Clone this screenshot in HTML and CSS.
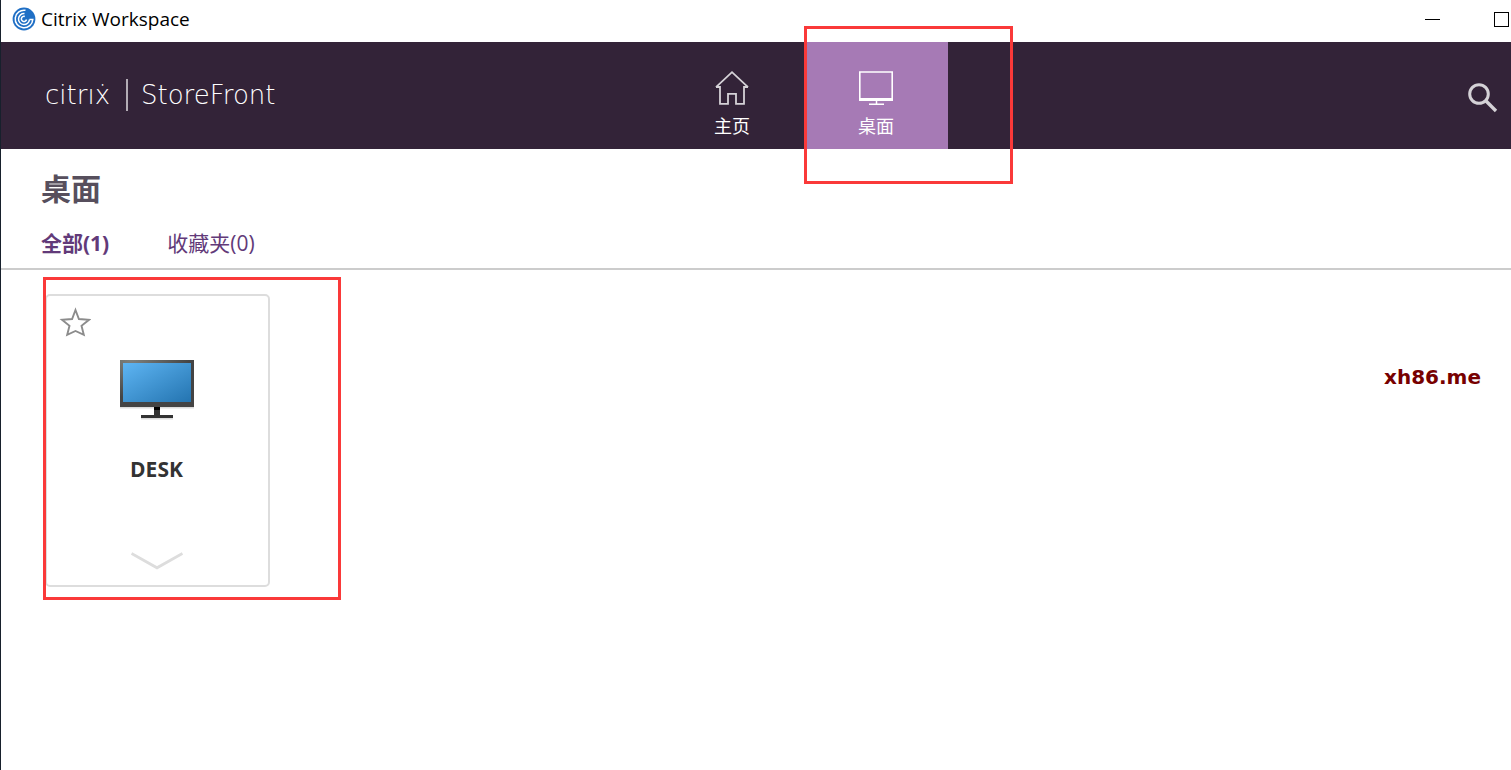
FILE: index.html
```html
<!DOCTYPE html>
<html lang="zh-CN">
<head>
    <meta charset="UTF-8">
    <meta name="viewport" content="width=device-width, initial-scale=1.0">
    <title>Citrix Workspace</title>
    <link rel="stylesheet" href="styles.css">
</head>
<body>
    <!-- Window title bar -->
    <div class="titlebar">
        <svg class="app-icon" viewBox="0 0 24 24" aria-hidden="true">
            <circle cx="12" cy="12" r="11.400" fill="#1f6fc5"/>
            <g fill="none" stroke="#fff" stroke-width="1.500">
                <path d="M13.500 3.300A8.800 8.800 0 1 0 20.800 12.500H17.500"/>
                <path d="M12.500 6.600A5.500 5.500 0 1 0 17.500 12.500"/>
                <path d="M12.800 9.500A2.600 2.600 0 1 0 14.500 12.500"/>
            </g>
        </svg>
        <span class="app-title">Citrix Workspace</span>
        <div class="window-buttons">
            <button class="window-button" aria-label="Minimize">
                <svg width="15" height="15" viewBox="0 0 15 15"><path d="M0 7.500H15" stroke="#000"/></svg>
            </button>
            <button class="window-button" aria-label="Maximize">
                <svg width="15" height="15" viewBox="0 0 15 15"><rect x=".5" y=".5" width="14" height="14" fill="none" stroke="#000"/></svg>
            </button>
        </div>
    </div>

    <header class="header">
        <div class="brand">
            <span class="brand-name">citrıẋ</span>
            <span class="brand-product">StoreFront</span>
        </div>
        <nav class="nav">
            <a class="nav-item" href="#home">
                <svg class="nav-icon" viewBox="0 0 36 36" fill="none" stroke="#d5d2d7" stroke-width="1.800">
                    <path d="M2 17.200L18 2.200L34 17.200M2 17H6V33.800H14V23.800H22V33.800H30V17H34"/>
                </svg>
                <span>主页</span>
            </a>
            <a class="nav-item active" href="#desktops">
                <svg class="nav-icon" viewBox="0 0 36 36" fill="none" stroke="#fff">
                    <path d="M1.800 29V2H34.200V29" stroke-width="1.600"/>
                    <path d="M1 29.500H35" stroke-width="3"/>
                    <path d="M18.500 31V34M11 34.200H26" stroke-width="1.500"/>
                </svg>
                <span>桌面</span>
            </a>
            <div class="highlight highlight-nav"></div>
        </nav>
        <button class="search" aria-label="搜索">
            <svg width="30" height="30" viewBox="0 0 30 30" fill="none" stroke="#d5d2d7">
                <circle cx="11" cy="11" r="9.300" stroke-width="3"/>
                <path d="M17.800 17.800L28 28" stroke-width="3.400"/>
            </svg>
        </button>
    </header>

    <main>
        <h1 class="page-title">桌面</h1>
        <div class="tabs">
            <a class="tab selected" href="#all">全部(1)</a>
            <a class="tab" href="#favorites">收藏夹(0)</a>
        </div>
        <div class="content">
            <div class="card">
                <button class="favorite" aria-label="收藏">
                    <svg width="32" height="30" viewBox="0 0 32 30" fill="none" stroke="#8c8c8c" stroke-width="1.900">
                        <path d="M16.500 3L19.900 12L30 12.800L22.500 18.800L24.800 27.800L16.500 24L8.200 27.800L10.500 18.800L3 12.800L13.100 12Z"/>
                    </svg>
                </button>
                <svg class="desktop-icon" viewBox="0 0 76 62" aria-hidden="true">
                    <defs>
                        <linearGradient id="screen" x1="0" y1="0" x2="1" y2="1">
                            <stop offset="0" stop-color="#5eb5f3"/>
                            <stop offset="1" stop-color="#2474b0"/>
                        </linearGradient>
                        <radialGradient id="frame" cx=".15" cy="0" r=".8">
                            <stop offset="0" stop-color="#7d807d"/>
                            <stop offset="1" stop-color="#444"/>
                        </radialGradient>
                    </defs>
                    <path d="M1 48.500H75M22 59.500H54" stroke="#ddd" stroke-width="2"/>
                    <rect x="1" y="1" width="74" height="47" fill="url(#frame)"/>
                    <rect x="4" y="4" width="68" height="39" fill="url(#screen)"/>
                    <rect x="35" y="48" width="6" height="9" fill="#333"/>
                    <rect x="35" y="48" width="6" height="3" fill="#000"/>
                    <rect x="22" y="56" width="32" height="3" fill="#333"/>
                </svg>
                <span class="card-name">DESK</span>
                <button class="details" aria-label="详细信息">
                    <svg width="52" height="18" viewBox="0 0 52 18"><path d="M.5 1.500L26 15.800L51.500 1.500" fill="none" stroke="#ddd" stroke-width="2.800"/></svg>
                </button>
                <div class="highlight highlight-card"></div>
            </div>
            <span class="site-mark">xh86.me</span>
        </div>
    </main>
</body>
</html>
```
FILE: styles.css
```css
* {
    box-sizing: border-box;
}
body {
    margin: 0;
    min-height: 100vh;
    border-left: 1px solid #17202c;
    background: #fff;
    font-family: "Open Sans", "Noto Sans CJK SC", sans-serif;
}
button {
    padding: 0;
    border: 0;
    background: none;
}
button svg {
    display: block;
}
a {
    color: inherit;
    text-decoration: none;
}

.titlebar {
    display: flex;
    align-items: center;
    height: 42px;
    padding: 0 2px 4px 11px;
}
.app-icon {
    width: 24px;
    height: 24px;
}
.app-title {
    margin-left: 5px;
    font-size: 19px;
    line-height: 24px;
    color: #000;
}
.window-buttons {
    display: flex;
    gap: 54px;
    margin-left: auto;
}

.header {
    display: flex;
    align-items: center;
    height: 107px;
    background: #332338;
    color: #fff;
}
.brand {
    display: flex;
    align-items: center;
    width: 659px;
    padding: 0 0 2px 44px;
    font-family: "DejaVu Sans", sans-serif;
    font-size: 26px;
    font-weight: 200;
    line-height: 32px;
    color: #fff;
}
.brand-name {
    padding-right: 16px;
    border-right: 2px solid #b3acb5;
}
.brand-product {
    padding-left: 13px;
}
.nav {
    position: relative;
    display: flex;
    height: 100%;
}
.nav-item {
    display: flex;
    flex-direction: column;
    align-items: center;
    width: 144px;
    padding-top: 28px;
    font-size: 18px;
    line-height: 24px;
}
.nav-item.active {
    background: #a67ab5;
}
.nav-icon {
    width: 36px;
    height: 36px;
    margin-bottom: 8px;
}
.search {
    margin: 4px 13px 0 auto;
}

.page-title {
    margin: 0;
    padding: 20px 40px 0;
    font-size: 30px;
    line-height: 40px;
    color: #574f5d;
}
.tabs {
    display: flex;
    gap: 58px;
    padding: 19px 40px 10px;
    border-bottom: 2px solid #ccc;
    font-size: 21px;
    line-height: 30px;
    color: #623a79;
}
.tab.selected {
    font-weight: 700;
}
.content {
    display: flex;
    justify-content: space-between;
    align-items: flex-start;
    padding: 24px 30px 0 44px;
}
.card {
    position: relative;
    display: flex;
    flex-direction: column;
    align-items: center;
    width: 225px;
    height: 293px;
    padding: 11px 14px 15px 12px;
    border: 2px solid #ddd;
    border-radius: 5px;
}
.favorite {
    align-self: flex-start;
}
.desktop-icon {
    width: 76px;
    height: 62px;
    margin-top: 22px;
}
.card-name {
    margin-top: 33px;
    font-size: 21px;
    font-weight: 700;
    line-height: 30px;
    color: #333;
}
.details {
    margin-top: auto;
}
.site-mark {
    margin-top: 69px;
    font-family: "DejaVu Sans", sans-serif;
    font-size: 20px;
    font-weight: 700;
    line-height: 28px;
    color: #700;
}

/* red marker frames */
.highlight {
    position: absolute;
    border: 3px solid #fa3939;
    pointer-events: none;
}
.highlight-nav {
    top: -16px;
    left: 144px;
    width: 209px;
    height: 158px;
}
.highlight-card {
    top: -19px;
    left: -4px;
    width: 298px;
    height: 323px;
}
```
